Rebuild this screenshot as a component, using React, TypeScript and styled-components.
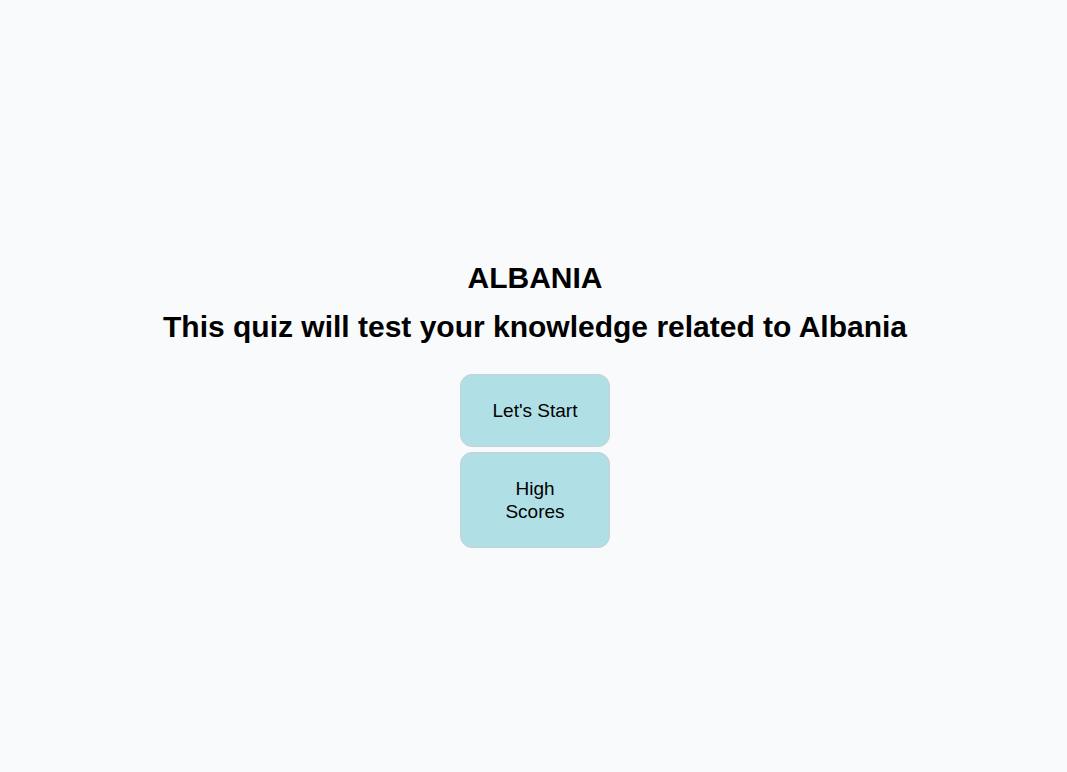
import React from "react";
import styled, { createGlobalStyle } from "styled-components";

const GlobalStyle = createGlobalStyle`
  html, body { margin: 0; padding: 0; }
  body {
    background: #f8fafc;
    font-family: "Liberation Sans", Arial, sans-serif;
    color: #000;
  }
`;

const Page = styled.main`
  box-sizing: border-box;
  min-height: 100vh;
  padding: 37px 0 0 3px;
  display: flex;
  flex-direction: column;
  align-items: center;
  justify-content: center;
`;

const Title = styled.h1`
  font-size: 30px;
  font-weight: 700;
  margin: 0 0 15px;
  text-align: center;
`;

const Subtitle = styled.h2`
  font-size: 30px;
  font-weight: 700;
  margin: 0 0 30px;
  text-align: center;
`;

const Buttons = styled.div`
  display: flex;
  flex-direction: column;
  align-items: center;
  gap: 5px;
`;

const Button = styled.button`
  width: 150px;
  padding: 24px 30px;
  background: #b0e0e6;
  border: 1px solid #c8d0d4;
  border-radius: 12px;
  font-family: "Liberation Sans", Arial, sans-serif;
  font-size: 19px;
  line-height: 23px;
  color: #000;
  cursor: pointer;
`;

export default function App() {
  return (
    <>
      <GlobalStyle />
      <Page>
        <Title>ALBANIA</Title>
        <Subtitle>This quiz will test your knowledge related to Albania</Subtitle>
        <Buttons>
          <Button>Let's Start</Button>
          <Button>High Scores</Button>
        </Buttons>
      </Page>
    </>
  );
}
